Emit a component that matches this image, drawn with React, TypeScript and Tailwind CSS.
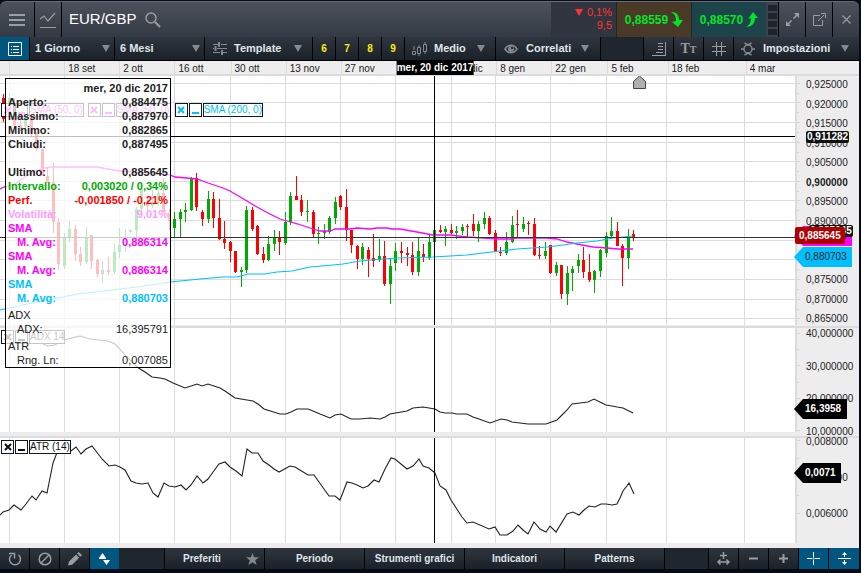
import type { ReactNode } from "react";

// x, high, low, body top, body bottom, 1 = up / 0 = down
const candles = [
    [3, 94, 122, 98, 119, 0], [9, 93, 113, 98, 105, 1], [14, 98, 129, 103, 125, 0], [20, 110, 131, 125, 128, 0],
    [25, 108, 131, 116, 126, 1], [31, 110, 137, 113, 134, 0], [36, 132, 151, 134, 149, 0], [42, 149, 176, 149, 176, 0],
    [47, 167, 183, 176, 182, 0], [53, 163, 233, 182, 222, 0], [58, 218, 270, 222, 264, 0], [64, 233, 269, 237, 266, 1],
    [69, 221, 242, 229, 238, 1], [75, 225, 261, 229, 254, 0], [80, 247, 266, 254, 262, 0], [86, 227, 264, 237, 262, 1],
    [91, 235, 269, 235, 261, 0], [97, 259, 277, 260, 274, 0], [102, 261, 282, 270, 274, 1], [108, 257, 275, 270, 272, 0],
    [114, 244, 274, 252, 272, 1], [119, 228, 258, 245, 252, 1], [125, 229, 252, 239, 246, 1], [130, 229, 233, 230, 232, 1],
    [136, 207, 240, 209, 230, 1], [141, 185, 210, 190, 209, 1], [147, 195, 210, 203, 206, 0], [152, 190, 208, 202, 206, 1],
    [158, 187, 206, 193, 203, 1], [163, 178, 212, 193, 212, 0], [169, 209, 230, 213, 221, 0], [174, 212, 237, 219, 228, 1],
    [180, 209, 237, 212, 219, 1], [185, 203, 222, 210, 212, 1], [191, 177, 211, 178, 210, 1], [196, 173, 211, 178, 207, 0],
    [202, 210, 226, 212, 219, 0], [208, 191, 223, 199, 219, 1], [213, 192, 228, 199, 218, 0], [219, 199, 240, 218, 239, 0],
    [224, 221, 249, 239, 243, 0], [230, 241, 262, 242, 251, 0], [235, 251, 273, 251, 272, 0], [241, 267, 287, 270, 272, 1],
    [246, 206, 273, 210, 270, 1], [252, 207, 231, 210, 229, 0], [257, 225, 255, 226, 254, 0], [263, 247, 263, 254, 260, 0],
    [268, 236, 261, 244, 260, 1], [274, 230, 251, 238, 244, 1], [279, 231, 255, 238, 242, 0], [285, 212, 245, 222, 243, 1],
    [290, 192, 225, 196, 222, 1], [296, 176, 200, 196, 200, 0], [301, 195, 216, 200, 212, 0], [307, 200, 222, 211, 212, 1],
    [313, 210, 237, 212, 234, 0], [318, 227, 244, 233, 234, 1], [324, 224, 239, 231, 233, 1], [329, 216, 234, 218, 232, 1],
    [335, 197, 224, 202, 218, 1], [340, 195, 210, 196, 207, 0], [346, 189, 241, 207, 230, 0], [351, 230, 253, 230, 245, 0],
    [357, 245, 269, 246, 259, 0], [362, 243, 265, 247, 259, 1], [368, 247, 277, 250, 259, 0], [373, 234, 267, 258, 261, 0],
    [379, 239, 262, 256, 260, 1], [384, 241, 286, 256, 284, 0], [390, 258, 304, 266, 284, 1], [395, 243, 271, 251, 263, 1],
    [401, 242, 263, 251, 253, 0], [407, 247, 266, 253, 255, 0], [412, 242, 275, 255, 272, 0], [418, 238, 276, 251, 272, 1],
    [423, 244, 262, 254, 257, 0], [429, 235, 260, 242, 258, 1], [434, 230, 242, 230, 242, 1], [440, 225, 233, 230, 232, 0],
    [445, 226, 246, 229, 232, 1], [451, 224, 234, 230, 233, 0], [456, 226, 239, 231, 233, 1], [462, 224, 235, 227, 231, 1],
    [467, 224, 238, 226, 227, 0], [473, 214, 236, 224, 231, 0], [478, 221, 242, 224, 231, 1], [484, 212, 229, 218, 224, 1],
    [489, 216, 235, 218, 234, 0], [495, 230, 252, 233, 252, 0], [500, 247, 256, 252, 253, 0], [506, 232, 255, 242, 253, 1],
    [512, 216, 243, 225, 242, 1], [517, 210, 238, 224, 225, 0], [523, 217, 232, 224, 229, 1], [528, 221, 235, 223, 224, 0],
    [534, 218, 256, 224, 255, 0], [539, 246, 259, 255, 256, 0], [545, 242, 259, 251, 256, 1], [550, 245, 274, 245, 273, 0],
    [556, 262, 276, 265, 273, 1], [561, 265, 299, 265, 294, 0], [567, 266, 305, 273, 294, 1], [572, 266, 291, 269, 273, 1],
    [578, 254, 273, 260, 266, 1], [583, 247, 278, 260, 272, 0], [589, 254, 282, 272, 280, 0], [594, 270, 293, 271, 280, 1],
    [600, 249, 277, 250, 271, 1], [606, 232, 257, 236, 253, 1], [611, 217, 238, 231, 236, 1], [617, 222, 246, 231, 246, 0],
    [622, 244, 286, 246, 258, 0], [628, 229, 269, 237, 258, 1], [633, 230, 241, 234, 237, 0],
];

const sma50 =
    "0,189 4,187 15,184 25,177 35,171 45,168 52,167 60,167 97,167 108,169 119,171 150,173 163,174 170,175 175,177 187,178 197,179 208,183 223,188 230,191 247,201 257,207 268,213 280,219 287,221 298,224 307,227 313,229 320,231 330,231 335,229 350,229 357,228 370,229 377,228 387,228 392,229 400,229 417,232 433,235 450,235 467,237 483,238 500,239 510,239 517,238 547,238 557,239 567,242 582,245 593,247 607,248 618,249 633,249";
const sma200 =
    "0,310 10,308 27,304 53,299 77,294 103,291 137,287 170,282 180,281 200,279 223,277 237,277 248,274 265,274 277,272 292,271 310,267 333,265 343,264 360,261 383,259 397,258 433,257 450,256 467,255 483,253 500,251 517,249 547,247 563,245 577,243 597,241 613,238 623,237 633,236";
const adx =
    "43,344 48,346 55,345 60,341 68,339 80,336 90,339 108,341 115,344 127,357 137,367 145,372 152,377 160,378 165,379 173,383 185,388 197,384 202,386 208,384 220,388 225,391 235,398 247,400 253,401 258,404 264,409 280,414 286,414 291,412 297,409 308,409 313,411 320,414 330,418 335,415 341,414 351,419 360,419 370,418 380,419 385,417 390,414 407,411 413,408 423,407 429,408 435,409 440,412 445,413 452,413 457,414 467,414 473,417 479,419 490,423 501,419 507,420 512,422 520,423 528,424 546,424 557,420 562,415 567,410 572,404 588,402 594,399 606,405 612,406 617,407 623,408 633,413";
const atr =
    "0,515 3,512 9,510 14,505 21,510 26,504 32,496 36,500 42,491 47,493 53,463 58,450 71,451 76,447 81,454 86,449 92,446 102,459 109,466 115,465 120,467 125,470 131,481 136,483 142,484 148,483 153,493 158,497 164,483 169,486 175,487 181,485 186,490 191,485 197,476 203,483 208,479 213,472 219,464 225,462 230,467 236,471 242,476 247,449 252,453 258,453 263,461 269,465 274,469 279,472 290,466 295,467 308,475 314,475 329,496 335,496 340,500 347,482 352,483 357,485 363,488 368,486 374,480 379,482 385,469 391,458 395,459 407,469 413,466 419,459 423,466 429,468 435,473 440,486 446,490 451,500 462,517 467,523 473,522 489,529 495,527 500,535 507,535 513,531 518,525 523,530 528,534 534,522 540,529 546,532 550,526 556,532 567,514 573,512 579,515 584,510 589,506 595,507 601,504 606,504 612,505 617,504 620,498 623,491 629,483 634,494";

const PLOT = 795;
const CURSOR = 434;

const dates = [
    { x: 9, label: "" },
    { x: 64, label: "18 set" },
    { x: 119, label: "2 ott" },
    { x: 174, label: "16 ott" },
    { x: 230, label: "30 ott" },
    { x: 285, label: "13 nov" },
    { x: 340, label: "27 nov" },
    { x: 395, label: "11 dic" },
    { x: 451, label: "25 dic" },
    { x: 495, label: "8 gen" },
    { x: 550, label: "22 gen" },
    { x: 606, label: "5 feb" },
    { x: 666, label: "18 feb" },
    { x: 744, label: "4 mar" },
];

const priceGrid = [83, 102, 122, 142, 161, 181, 200, 220, 240, 259, 279, 299, 318];
const prices = ["0,925000", "0,920000", "0,915000", "0,910000", "0,905000", "0,900000", "0,895000", "0,890000", "0,885000", "0,880000", "0,875000", "0,870000", "0,865000"];

const info = [
    { k: "Aperto:", v: "0,884475", c: "text-[#222]" },
    { k: "Massimo:", v: "0,887970", c: "text-[#222]" },
    { k: "Minimo:", v: "0,882865", c: "text-[#222]" },
    { k: "Chiudi:", v: "0,887495", c: "text-[#222]" },
    { k: "", v: "", c: "" },
    { k: "Ultimo:", v: "0,885645", c: "text-[#222]" },
    { k: "Intervallo:", v: "0,003020 / 0,34%", c: "text-[#00aa00]" },
    { k: "Perf.", v: "-0,001850 / -0,21%", c: "text-[#ff0000]" },
    { k: "Volatilità:", v: "9,01%", c: "text-[#ff9cff]" },
    { k: "SMA", v: "", c: "text-[#ff00ff]" },
    { k: "M. Avg:", v: "0,886314", c: "text-[#ff00ff]", sub: true },
    { k: "SMA", v: "", c: "text-[#ff00ff]" },
    { k: "M. Avg:", v: "0,886314", c: "text-[#ff00ff]", sub: true },
    { k: "SMA", v: "", c: "text-[#00bfff]" },
    { k: "M. Avg:", v: "0,880703", c: "text-[#00bfff]", sub: true },
];

// Toolbar pieces
function Arrow() {
    return (
        <svg width="8" height="7" viewBox="0 0 8 7" className="shrink-0 fill-[#858a90]">
            <path d="M0 0h8L4 7z" />
        </svg>
    );
}

function Icon({ w = 16, h = 16, children }: { w?: number; h?: number; children: ReactNode }) {
    return (
        <svg width={w} height={h} viewBox={`0 0 ${w} ${h}`} fill="none" stroke="currentColor" className="shrink-0">
            {children}
        </svg>
    );
}

function ToolSelect({ label, options, className }: { label: string; options: string[]; className: string }) {
    return (
        <label className={`relative flex items-center border-r border-black ${className}`}>
            <select aria-label={label} className="h-full w-full appearance-none bg-transparent pl-[5px] font-bold outline-none">
                {options.map((o) => (
                    <option key={o}>{o}</option>
                ))}
            </select>
            <span className="pointer-events-none absolute right-[4px]">
                <Arrow />
            </span>
        </label>
    );
}

function IconButton({ label, className = "", children }: { label: string; className?: string; children: ReactNode }) {
    return (
        <button aria-label={label} className={`flex shrink-0 items-center justify-center border-black text-[#9a9ea3] ${className}`}>
            {children}
        </button>
    );
}

// Chart pieces
function Plot({ top, height, className, children }: { top: number; height: number; className: string; children: ReactNode }) {
    return (
        <svg viewBox={`0 ${top} ${PLOT} ${height}`} preserveAspectRatio="none" fill="none" className={`block w-full bg-white ${className}`}>
            {dates.map((d) => (
                <rect key={d.x} x={d.x} y={top} width="1" height={height} fill="#dcdcdc" />
            ))}
            {children}
            <rect x={CURSOR} y={top} width="1" height={height} fill="#000" />
        </svg>
    );
}

function Legend({ name, className }: { name: string; className: string }) {
    return (
        <div className={`flex h-[14px] gap-px text-[10px] leading-[12px] ${className}`}>
            <button aria-label={`Chiudi ${name}`} className="flex w-[13px] items-center justify-center border border-[#111827] bg-white">
                <svg width="8" height="8" viewBox="0 0 8 8" fill="none" stroke="currentColor" strokeWidth="2">
                    <path d="M1 1l6 6M7 1L1 7" />
                </svg>
            </button>
            <button aria-label={`Riduci ${name}`} className="flex w-[13px] items-end justify-center border border-[#111827] bg-white pb-[2px]">
                <span className="h-[2px] w-[7px] bg-current" />
            </button>
            <span className="border border-[#111827] bg-white whitespace-nowrap">{name}</span>
        </div>
    );
}

function Ticks({ top, height, majors }: { top: number; height: number; majors: number[] }) {
    return (
        <svg width="3" height={height} viewBox={`0 ${top} 3 ${height}`} className="shrink-0 fill-[#d4d4d4]">
            {majors.map((y, i) => (
                <g key={y}>
                    <rect x="0" y={y} width="3" height="1" />
                    {i < majors.length - 1 && <rect x="0" y={Math.round((y + majors[i + 1]) / 2)} width="2" height="1" />}
                </g>
            ))}
        </svg>
    );
}

function Tag({ className, children }: { className: string; children: ReactNode }) {
    return (
        <span className={`absolute left-[-3px] h-[20px] pl-[11px] text-[10px] leading-[20px] [clip-path:polygon(0_50%,9px_0,100%_0,100%_100%,9px_100%)] ${className}`}>
            {children}
        </span>
    );
}

function Header() {
    return (
        <header className="flex h-[36px] items-stretch rounded-t-md border-t border-[#666b75] bg-linear-to-b from-[#4c515b] to-[#343a43]">
            <IconButton label="Menu" className="w-[35px] border-r">
                <Icon w={16} h={12}>
                    <path d="M0 1h16M0 6h16M0 11h16" strokeWidth="2" />
                </Icon>
            </IconButton>
            <IconButton label="Grafico" className="w-[27px] border-r">
                <Icon w={16} h={18}>
                    <path d="M0 8l4-3 4 5 7-8M0 16.500h16" strokeWidth="1.200" />
                </Icon>
            </IconButton>
            <h1 className="flex items-center pl-[7px] text-[15px] text-white">EUR/GBP</h1>
            <IconButton label="Cerca" className="pl-2">
                <Icon>
                    <circle cx="6" cy="6" r="5" strokeWidth="1.500" />
                    <path d="M10 10l5 5" strokeWidth="2" />
                </Icon>
            </IconButton>
            <div className="flex-1" />
            <div className="w-[66px] border-r border-[#20252d] bg-[#30353f] pt-[4px] pr-[4px] text-right text-[11px] leading-[13px] text-[#ff3333]">
                <div className="flex items-center justify-end gap-1">
                    <svg width="8" height="7" viewBox="0 0 8 7" fill="currentColor">
                        <path d="M0 0h8L4 7z" />
                    </svg>
                    0,1%
                </div>
                <div>9,5</div>
            </div>
            <button className="flex w-[74px] items-center justify-center gap-[3px] bg-[#493a28] text-[12px] font-bold text-[#00e626]">
                0,88559
                <svg width="12" height="15" viewBox="0 0 12 15" fill="currentColor">
                    <path d="M0 0c5 0 8 2 8 8h4l-5 7-6-5 4-1C5 5 4 2 0 0z" />
                </svg>
            </button>
            <button className="flex w-[75px] items-center justify-center gap-[3px] border-l border-[#20252d] bg-[#1e444b] text-[12px] font-bold text-[#00e626]">
                0,88570
                <svg width="12" height="15" viewBox="0 0 12 15" fill="currentColor">
                    <path d="M0 15c5 0 9-3 9-9h3L7 0 2 7l3-1c0 4-1 7-5 9z" />
                </svg>
            </button>
            <div className="flex w-[13px] flex-col items-center justify-center gap-[2px] border-r border-black bg-[#3c414b]">
                <span className="h-[6px] w-[9px] bg-[#1e232c]" />
                <span className="h-[6px] w-[9px] bg-[#1e232c]" />
                <span className="h-[6px] w-[9px] bg-[#1e232c]" />
                <span className="h-[6px] w-[9px] bg-[#1e232c]" />
            </div>
            <IconButton label="Espandi" className="w-[27px] border-r">
                <Icon w={13} h={13}>
                    <path d="M7.500 5.500L11 2M5.500 7.500L2 11" strokeWidth="1.500" />
                    <path d="M8 0h5v5zM0 8v5h5z" fill="currentColor" stroke="none" />
                </Icon>
            </IconButton>
            <IconButton label="Apri in una finestra" className="w-[27px] border-r">
                <Icon w={13} h={13}>
                    <path d="M7 2.500H.5v10h9V7M5 8l6-6M8 .5h4.500V5" />
                </Icon>
            </IconButton>
            <IconButton label="Chiudi" className="w-[26px]">
                <Icon w={9} h={9}>
                    <path d="M.5.5l8 8M8.500.5l-8 8" strokeWidth="1.200" />
                </Icon>
            </IconButton>
        </header>
    );
}

function Toolbar() {
    return (
        <div className="flex h-[24px] items-stretch border-b border-black bg-linear-to-b from-[#2f363f] to-[#1b2128] text-[11px] font-bold text-[#dfe5ea]">
            <button aria-label="Elenco" className="flex w-[30px] shrink-0 items-center justify-center border-r border-black bg-[#00567f] text-white">
                <Icon w={14} h={14}>
                    <path d="M.5.5h13v13H.5zM5 4.500h6M5 7.500h6M5 10.500h6M3 4.500h1M3 7.500h1M3 10.500h1" />
                </Icon>
            </button>
            <ToolSelect label="Intervallo" options={["1 Giorno", "1 Settimana", "1 Mese"]} className="w-[85px]" />
            <ToolSelect label="Periodo" options={["6 Mesi", "1 Anno", "2 Anni"]} className="w-[90px]" />
            <button className="flex w-[108px] items-center gap-[7px] border-r border-black pr-[10px] pl-2">
                <span className="text-[#858a90]">
                    <Icon w={14} h={13}>
                        <path d="M0 2.500h5M8 2.500h6M0 6.500h1M4 6.500h10M0 10.500h7M10 10.500h4" />
                        <path d="M6 0v5M2.500 4v5M9 8v5" strokeWidth="2" />
                    </Icon>
                </span>
                Template
                <span className="ml-auto">
                    <Arrow />
                </span>
            </button>
            {["6", "7", "8", "9"].map((n) => (
                <button key={n} className="w-[23px] border-r border-black text-[10px] text-[#ffee00]">
                    {n}
                </button>
            ))}
            <button className="flex w-[91px] items-center gap-[7px] border-r border-black pr-[10px] pl-[7px]">
                <span className="text-[#858a90]">
                    <Icon w={15} h={14}>
                        <path d="M.5 9.500h3v3h-3zM5.500 5.500h3v6h-3zM11.500 2.500h3v7h-3zM2 8V4M7 3v2M7 12v2M13 0v2M13 10v2" />
                    </Icon>
                </span>
                Medio
                <span className="ml-auto">
                    <Arrow />
                </span>
            </button>
            <button className="flex w-[105px] items-center gap-2 border-r border-black pr-[11px] pl-2">
                <span className="text-[#858a90]">
                    <Icon w={14} h={10}>
                        <path d="M1 5c3-5 9-5 12 0-3 5-9 5-12 0z" strokeWidth="1.500" />
                        <circle cx="7" cy="5" r="3" fill="currentColor" stroke="none" />
                        <circle cx="8" cy="4" r="1.200" fill="#252b33" stroke="none" />
                    </Icon>
                </span>
                Correlati
                <span className="ml-auto">
                    <Arrow />
                </span>
            </button>
            <div className="flex-1 border-r border-black bg-[#20262e]" />
            <IconButton label="Scala" className="w-[30px] border-r">
                <Icon w={14} h={14}>
                    <path d="M13.500 0v14M6 1.500h5M6 4.500h5M6 7.500h5M4 10.500h7M0 13.500h14" />
                </Icon>
            </IconButton>
            <IconButton label="Testo" className="w-[30px] border-r">
                <span className="font-['Liberation_Serif',serif] text-[14px] leading-none">T</span>
                <span className="pt-[3px] font-['Liberation_Serif',serif] text-[10px] leading-none">T</span>
            </IconButton>
            <IconButton label="Griglia" className="w-[30px] border-r">
                <Icon w={14} h={14}>
                    <path d="M4.500 0v14M9.500 0v14M0 4.500h14M0 9.500h14" />
                </Icon>
            </IconButton>
            <button className="flex w-[125px] items-center gap-2 pr-[10px] pl-[7px]">
                <span className="text-[#858a90]">
                    <Icon w={14} h={14}>
                        <circle cx="7" cy="7" r="4" strokeWidth="1.500" />
                        <path d="M7 3L3.500 1M7 3l3.500-2M7 11l-3.500 2M7 11l3.500 2M0 7h3M11 7h3" strokeWidth="1.500" />
                    </Icon>
                </span>
                Impostazioni
                <span className="ml-auto">
                    <Arrow />
                </span>
            </button>
        </div>
    );
}

function TimeAxis() {
    return (
        <div className="flex h-[15px] border-b-2 border-[#dcdcdc] bg-[#ededed] text-[10px] leading-[15px] text-[#222]">
            <div className="relative flex flex-1">
                <div style={{ width: `${(9 / PLOT) * 100}%` }} />
                {dates.map((d, i) => (
                    <div
                        key={d.x}
                        style={{ width: `${(((dates[i + 1]?.x ?? PLOT) - d.x) / PLOT) * 100}%` }}
                        className="h-[13px] border-l border-[#dcdcdc] pl-[3px] whitespace-nowrap"
                    >
                        {d.label}
                    </div>
                ))}
                <span
                    style={{ left: `${(CURSOR / PLOT) * 100}%` }}
                    className="absolute top-0 h-[14px] -translate-x-1/2 bg-black leading-[14px] font-bold whitespace-nowrap text-white"
                >
                    mer, 20 dic 2017
                </span>
            </div>
            <div className="w-[62px]" />
        </div>
    );
}

function InfoBox() {
    return (
        <dl className="absolute top-[2px] left-[5px] z-10 w-[166px] border border-black bg-white/75 px-[2px] pt-[2px] text-[11px] leading-[14px] text-[#222]">
            <div className="text-right font-bold">mer, 20 dic 2017</div>
            {info.map((r, i) => (
                <div key={i} className={`flex h-[14px] justify-between font-bold ${r.c}`}>
                    <dt className={r.sub ? "pl-[9px]" : ""}>{r.k}</dt>
                    <dd>{r.v}</dd>
                </div>
            ))}
            <dt className="pt-[3px]">ADX</dt>
            <dd className="flex justify-between pl-[9px]">
                <span>ADX:</span>
                <span>16,395791</span>
            </dd>
            <dt className="pt-[3px]">ATR</dt>
            <dd className="flex justify-between pl-[9px]">
                <span>Rng. Ln:</span>
                <span>0,007085</span>
            </dd>
        </dl>
    );
}

function Charts() {
    return (
        <main className="relative bg-[#ededed] text-[#222]">
            <InfoBox />

            {/* Price */}
            <section className="flex h-[252px] border-b-2 border-[#dcdcdc]">
                <div className="relative h-[249px] flex-1 border-r-2 border-[#dcdcdc]">
                    <Plot top={76} height={249} className="h-[249px]">
                        {priceGrid.map((y) => (
                            <rect key={y} x="0" y={y} width={PLOT} height="1" fill="#dcdcdc" />
                        ))}
                        {candles.map(([x, high, low, top, bottom, up]) => (
                            <g key={x} fill={up ? "#00aa00" : "#ff0000"}>
                                <rect x={x} y={high} width="1" height={low - high} />
                                <rect x={x - 1} y={top} width="3" height={bottom - top} />
                            </g>
                        ))}
                        <polyline points={sma50} stroke="#ff00ff" strokeWidth="1.300" />
                        <polyline points={sma200} stroke="#00bfff" strokeWidth="1.200" />
                        <rect x="0" y="136" width={PLOT} height="1" fill="#000" />
                        <rect x="0" y="237" width={PLOT} height="1" fill="#333" />
                        <path d="M633.500 88.500v-7l6-5.500 6 5.500v7z" fill="#b0b0b0" stroke="#444" />
                    </Plot>
                    <div className="absolute top-[27px] left-px flex gap-1">
                        <Legend name="SMA (50, 0)" className="text-[#ff00ff]" />
                        <Legend name="SMA (50, 0)" className="text-[#ff00ff]" />
                        <Legend name="SMA (200, 0)" className="text-[#00bfff]" />
                    </div>
                </div>
                <div className="relative flex w-[62px]">
                    <Ticks top={76} height={249} majors={priceGrid} />
                    <div className="flex h-[247px] flex-col justify-between pt-[5px] pl-[6px] text-[10px] leading-[8px]">
                        {prices.map((p) => (
                            <span key={p} className={p === "0,900000" ? "font-bold" : ""}>
                                {p}
                            </span>
                        ))}
                    </div>
                    <span className="absolute top-[55px] left-[9px] rounded-xs bg-[#111] px-px text-[10px] leading-[12px] font-bold text-white">0,911282</span>
                    <Tag className="top-[150px] w-[58px] bg-[#ff00ff]">0,886314</Tag>
                    <span className="absolute top-[149px] left-[12px] rounded-xs bg-[#111] px-px text-[10px] leading-[12px] font-bold text-white">0,885645</span>
                    <span className="absolute top-[151px] left-[-2px] rounded-xs bg-[#b00000] px-1 text-[10px] leading-[17px] font-bold text-white">0,885645</span>
                    <Tag className="top-[171px] w-[58px] bg-[#00bfff]">0,880703</Tag>
                </div>
            </section>

            {/* ADX */}
            <section className="flex h-[110px] border-b-2 border-[#dcdcdc]">
                <div className="relative h-[104px] flex-1 border-r-2 border-[#dcdcdc]">
                    <Plot top={328} height={104} className="h-[104px]">
                        <polyline points={adx} stroke="#222" strokeWidth="1.100" />
                    </Plot>
                    <div className="absolute top-[2px] left-px">
                        <Legend name="ADX 14" className="text-[#222]" />
                    </div>
                </div>
                <div className="relative flex w-[62px]">
                    <Ticks top={328} height={108} majors={[333, 365, 398, 430]} />
                    <div className="flex flex-col justify-between pt-[2px] pl-[6px] text-[10px] leading-[8px]">
                        <span>40,000000</span>
                        <span>30,000000</span>
                        <span>20,000000</span>
                        <span>10,000000</span>
                    </div>
                    <Tag className="top-[71px] w-[53px] bg-black font-bold text-white">16,3958</Tag>
                </div>
            </section>

            {/* ATR */}
            <section className="flex h-[110px]">
                <div className="relative h-[105px] flex-1 border-r-2 border-[#dcdcdc]">
                    <Plot top={438} height={105} className="h-[105px]">
                        <polyline points={atr} stroke="#222" strokeWidth="1.100" />
                    </Plot>
                    <div className="absolute top-[2px] left-px">
                        <Legend name="ATR (14)" className="text-[#111]" />
                    </div>
                </div>
                <div className="relative flex w-[62px]">
                    <Ticks top={438} height={105} majors={[440, 476, 513]} />
                    <div className="flex h-[80px] flex-col justify-between pl-[6px] text-[10px] leading-[8px]">
                        <span>0,008000</span>
                        <span>0,007000</span>
                        <span>0,006000</span>
                    </div>
                    <Tag className="top-[25px] w-[47px] bg-black font-bold text-white">0,0071</Tag>
                </div>
            </section>
        </main>
    );
}

function BottomBar() {
    return (
        <footer className="flex h-[21px] items-stretch bg-linear-to-b from-[#2f363f] to-[#1b2128] text-[10px] font-bold text-[#dfe5ea]">
            <IconButton label="Ricarica" className="w-[30px] border-r">
                <Icon w={14} h={14}>
                    <path d="M10.500 3a5.500 5.500 0 1 1-7 0" strokeWidth="1.500" />
                    <path d="M1 1.500h5.500v5" strokeWidth="1.500" />
                </Icon>
            </IconButton>
            <IconButton label="Annulla" className="w-[30px] border-r">
                <Icon w={14} h={14}>
                    <circle cx="7" cy="7" r="5.800" strokeWidth="1.500" />
                    <path d="M3 11l8-8" strokeWidth="1.500" />
                </Icon>
            </IconButton>
            <IconButton label="Disegna" className="w-[30px] border-r">
                <Icon w={14} h={14}>
                    <path d="M0 13.500l1-4L8 2.500l3.200 3.200-7 7zM9 1.500L10.500 0 14 3l-1.700 1.700z" fill="currentColor" stroke="none" />
                </Icon>
            </IconButton>
            <IconButton label="Ordina" className="w-[29px] bg-[#00567f] text-white">
                <svg width="11" height="12" viewBox="0 0 11 12" fill="#fff">
                    <path d="M0 5l3.500-5L7 5v1H0zM4 7h7L7.500 12z" />
                </svg>
            </IconButton>
            <div className="w-[46px] border-r border-black bg-[#20262e]" />
            <button className="flex w-[100px] items-center border-r border-black pr-[5px] pl-[18px]">
                Preferiti
                <svg width="13" height="12" viewBox="0 0 13 12" className="ml-auto fill-[#858a90]">
                    <path d="M6.500 0l1.600 4.300H13L9.200 7.200l1.400 4.800-4.100-2.800L2.400 12l1.400-4.800L0 4.300h4.900z" />
                </svg>
            </button>
            {["Periodo", "Strumenti grafici", "Indicatori", "Patterns"].map((t) => (
                <button key={t} className="w-[100px] border-r border-black whitespace-nowrap">
                    {t}
                </button>
            ))}
            <div className="flex-1 border-r border-black bg-[#20262e]" />
            <IconButton label="Adatta" className="w-[30px] border-r">
                <Icon w={13} h={13}>
                    <path d="M6.500 0v7M3 3.500h7M1 10h11M3.500 7.500L1 10l2.500 2.500M9.500 7.500L12 10l-2.500 2.500" strokeWidth="1.500" />
                </Icon>
            </IconButton>
            <IconButton label="Riduci zoom" className="w-[30px] border-r">
                <Icon w={9} h={9}>
                    <path d="M0 4.500h9" strokeWidth="2" />
                </Icon>
            </IconButton>
            <IconButton label="Aumenta zoom" className="w-[30px] border-r">
                <Icon w={9} h={9}>
                    <path d="M0 4.500h9M4.500 0v9" strokeWidth="2" />
                </Icon>
            </IconButton>
            <IconButton label="Mirino" className="w-[30px] border-r bg-[#00567f] text-white">
                <Icon w={13} h={13}>
                    <path d="M6.500 0v5M6.500 8v5M0 6.500h5M8 6.500h5" stroke="#fff" />
                    <path d="M6.500 5v3M5 6.500h3" stroke="#7fb4cc" />
                </Icon>
            </IconButton>
            <IconButton label="Separa" className="w-[30px] bg-[#00567f] text-white">
                <Icon w={13} h={13}>
                    <path d="M0 6.500h13M6.500 1v4M6.500 8v4" stroke="#fff" />
                    <path d="M4 3l2.500-3L9 3zM4 10l2.500 3L9 10z" fill="#fff" stroke="none" />
                </Icon>
            </IconButton>
        </footer>
    );
}

export default function App() {
    return (
        <div className="min-h-screen bg-[#070b16] pt-px pr-[2px] font-['Liberation_Sans',Arial,sans-serif]">
            <Header />
            <Toolbar />
            <TimeAxis />
            <Charts />
            <BottomBar />
        </div>
    );
}
